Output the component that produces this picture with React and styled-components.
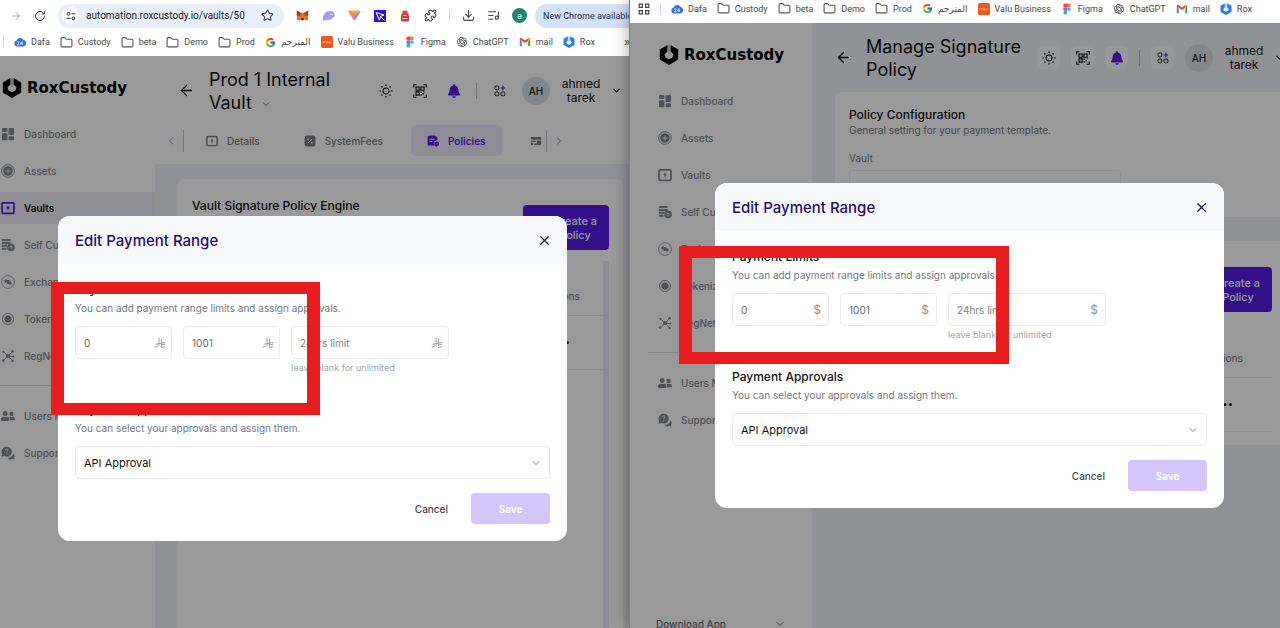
import React from "react";
import styled, { createGlobalStyle, css } from "styled-components";
import {
  ArrowLeft, ArrowRight, RotateCw, Star, Folder, Puzzle, Download, ListMusic,
  ChevronDown, ChevronLeft, ChevronRight, X, Plus,
} from "lucide-react";
import { FcGoogle } from "react-icons/fc";
import { RiOpenaiFill } from "react-icons/ri";
import { FaBell, FaUserFriends } from "react-icons/fa";

const GlobalStyle = createGlobalStyle`
  *, *::before, *::after { box-sizing: border-box; }
  html, body { margin: 0; height: 100%; overflow: hidden; }
  body { font-family: Inter, "Open Sans", sans-serif; font-size: 11px; color: #111; background: #fff; }
  button, input, select { font: inherit; color: inherit; margin: 0; }
  button { border: 0; padding: 0; background: none; cursor: pointer; }
  a { color: inherit; text-decoration: none; }
  h1, h2, h3, p { margin: 0; font-weight: 400; }
  svg { display: block; flex: none; }
`;

/* ---------- icons ---------- */

const Svg = ({ size = 14, box = 24, children, ...rest }) => (
  <svg width={size} height={size} viewBox={`0 0 ${box} ${box}`} fill="none" aria-hidden="true" {...rest}>
    {children}
  </svg>
);

const DashboardIcon = () => (
  <Svg box={14}>
    <g fill="currentColor">
      <rect x="1" y="1" width="5.4" height="4" rx=".8" />
      <rect x="1" y="6.2" width="5.4" height="7" rx=".8" />
      <rect x="7.6" y="1" width="5.4" height="7" rx=".8" />
      <rect x="7.6" y="9.2" width="5.4" height="4" rx=".8" />
    </g>
  </Svg>
);
const AssetsIcon = () => (
  <Svg box={14}>
    <circle cx="7" cy="7" r="6.3" stroke="currentColor" strokeWidth=".9" />
    <circle cx="7" cy="7" r="4.8" fill="currentColor" />
    <path d="M7 4.6v4.8M4.6 7h4.8" stroke="#fff" strokeWidth=".8" />
  </Svg>
);
const VaultIcon = ({ size = 14 }) => (
  <Svg box={14} size={size}>
    <rect x="1" y="1.8" width="12" height="10.6" rx="1.2" stroke="currentColor" strokeWidth="1.7" />
    <circle cx="7" cy="6.4" r="1.3" fill="currentColor" />
    <path d="M7 6.5v3" stroke="currentColor" strokeWidth="1" />
  </Svg>
);
const CustodyIcon = () => (
  <Svg box={14}>
    <path d="M.8 1h8.8v2H.8zM.8 3.9h8.8v2H.8zM.8 6.8h5.4v2H.8zM.8 9.7h4.8v2H.8z" fill="currentColor" />
    <circle cx="10" cy="9.4" r="3.8" fill="currentColor" />
    <path d="M8 9.6c1-1.6 3-1.6 4 0M10 8.6v2.4" stroke="#fff" strokeWidth=".8" />
  </Svg>
);
const ExchangeIcon = () => (
  <Svg box={14}>
    <circle cx="7" cy="7" r="6.4" stroke="currentColor" strokeWidth=".8" />
    <path d="M3 6 5.4 3.6V5h2.8v2.2H5.4v1.2z M11 8 8.6 10.4V9H5.8V6.8h2.8V5.6z" fill="currentColor" />
  </Svg>
);
const TokenIcon = () => (
  <Svg box={14}>
    <circle cx="7" cy="7" r="5.5" stroke="currentColor" strokeWidth=".9" />
    <circle cx="7" cy="7" r="3.6" fill="currentColor" />
  </Svg>
);
const NetworkIcon = () => (
  <Svg box={14}>
    <path d="M7 7 2.6 3M7 7l4.6-4.6M7 7l5 .6M7 7 2.4 11.4M7 7l4.4 4.8" stroke="currentColor" strokeWidth=".9" />
    <g fill="currentColor">
      <circle cx="7" cy="7" r="2" /><circle cx="2.4" cy="2.8" r="1.1" /><circle cx="11.6" cy="2.2" r="1.3" />
      <circle cx="12.4" cy="7.6" r="1" /><circle cx="2.2" cy="11.6" r="1.3" /><circle cx="11.6" cy="12" r="1.3" />
    </g>
  </Svg>
);
const SupportIcon = () => (
  <Svg box={14}>
    <path d="M12.4 7.2c1.6 1.6 1.4 3.6.6 4.6l.6 1.8-2-.5c-2 .8-4.2.2-5-1.4 3.2 0 5.6-1.8 5.8-4.5z" fill="currentColor" />
    <path d="M5.6.8a4.9 4.9 0 1 1-2 9.2L.4 10.8l.8-2.6A4.9 4.9 0 0 1 5.6.8z" fill="currentColor" />
    <path d="M4.3 4.3c.2-1.8 3-1.5 2.7.1-.2.9-1.3.9-1.3 2M5.7 7.4v.9" stroke="#fff" strokeWidth=".9" />
  </Svg>
);
const FeesIcon = () => (
  <Svg size={12} box={12}>
    <rect x=".6" y=".6" width="10.8" height="10.8" rx="2.4" fill="currentColor" />
    <path d="m4 8 4-4" stroke="#fff" strokeWidth=".9" />
    <circle cx="4.2" cy="4.3" r=".9" fill="#fff" /><circle cx="7.8" cy="7.7" r=".9" fill="#fff" />
  </Svg>
);
const PoliciesIcon = () => (
  <Svg size={12} box={12}>
    <path d="M3 .5h5l2.4 2.4v2.7C8 5 6.4 6.7 6.7 8.3c.1 1 .5 1.8 1 2.3H1.9C1 10.6.6 10 .6 9.2V2.6C.6 1.2 1.5.5 3 .5z" fill="currentColor" />
    <path d="M2.6 4.2h5M2.6 6.4h2.8" stroke="#fff" strokeWidth=".9" />
    <path d="M9.6 6.4 12 7.2v1.8c0 1.4-1.2 2.3-2.4 2.8-1.2-.5-2.2-1.4-2.2-2.8V7.2z" fill="currentColor" />
  </Svg>
);
const CardsIcon = () => (
  <Svg size={12} box={12}>
    <path d="M1.8 2h8.4c.6 0 1 .4 1 1v1.6H.8V3c0-.6.4-1 1-1zM.8 5.4h5.4v1.4H.8zM7 5.4h4.2V9c0 .6-.4 1-1 1H4V8.4h3zM.8 7.8h2.4V10H1.8c-.6 0-1-.4-1-1z" fill="currentColor" />
  </Svg>
);
const SunIcon = () => (
  <Svg size={14}>
    <circle cx="12" cy="12" r="5" stroke="currentColor" strokeWidth="1.8" />
    <g fill="currentColor">
      {[[12, 2], [12, 22], [2, 12], [22, 12], [5, 5], [19, 5], [5, 19], [19, 19]].map(([x, y]) => (
        <circle key={`${x}-${y}`} cx={x} cy={y} r="1.4" />
      ))}
    </g>
  </Svg>
);
const QrIcon = () => (
  <Svg size={14} box={14}>
    <path d="M.7 3.5V.7h2.8M10.5.7h2.8v2.8M.7 10.5v2.8h2.8M13.3 10.5v2.8h-2.8" stroke="currentColor" strokeWidth="1.1" />
    <path d="M3 3h3.2v3.2H3zM7.9 3h3.2v3.2H7.9zM3 7.9h3.2v3.2H3z" stroke="currentColor" strokeWidth="1.1" />
    <path d="M7.4 7.4H9V9H7.4zM9.4 9H11v1.4H9.4zM7.6 10.2H9v1.4H7.6zM10.4 7.4h1.2v1.2h-1.2z" fill="currentColor" />
  </Svg>
);
const AppsIcon = () => (
  <Svg size={12} box={12}>
    <g stroke="currentColor" strokeWidth="1">
      <rect x="1" y="1" width="3.8" height="3.8" rx="1.2" />
      <rect x="1" y="7" width="3.8" height="3.8" rx="1.2" />
      <rect x="7" y="7" width="3.8" height="3.8" rx="1.2" />
    </g>
    <path d="M8.9.8v4.4M6.7 3h4.4" stroke="#5519e6" strokeWidth="1.2" />
  </Svg>
);
const LogoMark = () => (
  <svg width="20" height="22" viewBox="0 0 20 22" aria-hidden="true">
    <path d="M8.4 1 .8 5.4v10.2L10 21l9.200-5.400V5.400L11.600 1v6.600l3 2.900-1.300 3.300L10 15.200l-3.300-1.400-1.300-3.300 3-2.900z" fill="#000" />
    <path d="M9.500 1h1v9h-1z" fill="#000" opacity=".35" />
  </svg>
);
const RiyalIcon = () => (
  <Svg size={12} box={12}>
    <path d="M5 .8v7c0 1-.8 1.5-4.4 2.3M7.4 1.4v8.2M1.6 7.3 11 5.4M7.4 7.9l4-.9M7 10.6l4-.9" stroke="currentColor" strokeWidth=".9" />
  </Svg>
);

const CloudIcon = () => (
  <Svg size={12} box={12}>
    <path d="M3 10.5a3 3 0 0 1-.4-5.9A3.7 3.7 0 0 1 9.5 4a3.3 3.3 0 0 1-.4 6.5z" fill="#2f6fed" />
    <path d="M3.3 6c1.4-1.2 2.4.3 0 2.8h2.2M8 9V5.6L6.4 7.8h2.5" stroke="#fff" strokeWidth=".8" />
  </Svg>
);
const ValuIcon = () => (
  <Svg size={12} box={12}>
    <rect width="12" height="12" rx="1.5" fill="#f4581c" />
    <path d="M1.8 5.5l1 1.5 1-1.5h1.5v1.3h1.5V5.5v1.3h2.5V5.4" stroke="#ffd9c8" strokeWidth=".7" />
  </Svg>
);
const FigmaIcon = () => (
  <Svg size={12} box={12}>
    <path d="M4 .5h2v3.7H4A1.850 1.850 0 0 1 4 .5z" fill="#f24e1e" />
    <path d="M6 .5h2a1.850 1.850 0 0 1 0 3.700H6z" fill="#ff7262" />
    <path d="M4 4.200h2v3.700H4a1.850 1.850 0 0 1 0-3.700z" fill="#a259ff" />
    <circle cx="7.9" cy="6" r="1.85" fill="#1abcfe" />
    <path d="M4 7.900h2v1.800A1.850 1.850 0 1 1 4 7.900z" fill="#0acf83" />
  </Svg>
);
const GmailIcon = () => (
  <Svg size={12} box={12}>
    <path d="M.8 2.500v7.800h2V5.500z" fill="#4285f4" />
    <path d="M11.200 2.500v7.800h-2V5.500z" fill="#34a853" />
    <path d="M.8 3.200 6 7l5.200-3.800V2.400c-.6-.8-1.500-.6-2-.2L6 4.600 2.800 2.200c-.5-.4-1.400-.6-2 .2z" fill="#ea4335" />
    <path d="M9.200 4.700V2.200c.8-.6 2-.2 2 1z" fill="#fbbc04" />
  </Svg>
);
const RoxIcon = () => (
  <Svg size={12} box={12}>
    <path d="M4.800.3.500 2.800v6.300L6 11.900l5.500-2.800V2.800L7.200.3v4.300l1.600 1.600L8 7.800l-2 .9-2-.9-.8-1.600 1.600-1.600z" fill="#2b7cf0" />
    <path d="M5.500.6h1v5h-1z" fill="#7db0f8" />
  </Svg>
);
const GridIcon = () => (
  <Svg size={12} box={12}>
    <path d="M1.200 1.200h3.200v3.200H1.200zM7.600 1.200h3.200v3.200H7.600zM1.200 7.600h3.200v3.200H1.200zM7.600 7.600h3.200v3.200H7.600z" stroke="#444" strokeWidth="1.2" />
  </Svg>
);
const SiteIcon = () => (
  <Svg size={10} box={10}>
    <path d="M5.400 2.800H9.500M.5 7.300h4" stroke="#333" strokeWidth="1.1" />
    <circle cx="2.5" cy="2.8" r="1.4" stroke="#333" strokeWidth="1" />
    <circle cx="7.4" cy="7.3" r="1.4" stroke="#333" strokeWidth="1" />
  </Svg>
);
const FoxIcon = () => (
  <Svg size={13} box={13}>
    <path d="M.8 1.500 5 4h3l4.200-2.500.3 4-.7 2.500.6 2.500-2.400 1-1.700-1H4.700l-1.700 1-2.400-1L1.200 8 .5 5.500z" fill="#e8702a" />
    <path d="M.8 1.500 5 4 4 7 1.200 6.500zM12.200 1.500 8 4l1 3 2.800-.5z" fill="#a5401b" />
    <path d="M5 9.200h3l-.5 2h-2z" fill="#2c2c2c" />
  </Svg>
);
const GhostIcon = () => (
  <Svg size={13} box={13}>
    <path d="M.6 10.500C1 5 4 2 8 2c3 0 4.700 1.600 4.700 4 0 2-1.200 3.200-2.600 3-1 2-2.400 2.200-3.100 1.200-1 1.300-2 1.600-2.600.6-1.200 1-3 1.400-3.800-.3z" fill="#a99bea" />
    <path d="M8.400 4.600v1.400M10.300 4.600v1.400" stroke="#fff" strokeWidth=".8" />
  </Svg>
);
const GemIcon = () => (
  <Svg size={13} box={13}>
    <path d="M1.500 1.500h10c.8 0 1 .8.8 1.500l-5 7.800c-.4.6-1.200.6-1.600 0L.7 3c-.3-.7 0-1.500.8-1.500z" fill="#f7a544" />
    <path d="M.7 3c-.3-.7 0-1.500.8-1.500L6.500 5v6.200c-.3 0-.6-.1-.8-.4z" fill="#f5806e" />
    <path d="M12.300 3 6.500 5.200v6c.3 0 .6-.1.800-.4z" fill="#8a8ff0" />
  </Svg>
);
const CursorIcon = () => (
  <Svg size={12} box={12}>
    <rect width="12" height="12" fill="#2a16d8" />
    <path d="M2 2.500 10 5 6.600 6.300 5.400 10zM6.500 6.500l4 4" stroke="#fff" strokeWidth="1" />
  </Svg>
);
const RobotIcon = () => (
  <Svg size={12} box={12}>
    <path d="M4 3V1.200h4V3M2.500 11V5.500C2.500 4 3.500 3 6 3s3.500 1 3.500 2.500V11z" stroke="#e0393c" fill="#e0393c" />
    <path d="M4.500 5.500h3M3.500 8.500h5" stroke="#fff" strokeWidth="1.2" />
  </Svg>
);

/* ---------- windows and browser chrome ---------- */

const Desktop = styled.div`
  display: flex;
  height: 100vh;
  overflow: hidden;
`;
const BrowserWindow = styled.section`
  position: relative;
  display: flex;
  flex-direction: column;
  flex: ${(p) => p.$share} 1 0;
  min-width: 0;
  background: #fff;
  ${(p) => p.$front && css`
    z-index: 1;
    box-shadow: -1px 0 0 #7d7e82, 0 0 16px rgba(0, 0, 0, 0.4);
  `}
`;
const Toolbar = styled.div`
  display: flex;
  align-items: center;
  gap: 12px;
  flex: none;
  height: 31px;
  padding-left: 10px;
  overflow: hidden;
  font-family: Roboto, sans-serif;
  color: #444;
`;
const AddressBar = styled.label`
  display: flex;
  align-items: center;
  gap: 7px;
  flex: none;
  width: 226px;
  height: 24px;
  padding: 0 10px 0 4px;
  border-radius: 12px;
  background: #e9effa;
`;
const SiteBadge = styled.span`
  display: grid;
  place-items: center;
  flex: none;
  width: 17px;
  height: 17px;
  border-radius: 50%;
  background: #fff;
`;
const Address = styled.input`
  flex: 1;
  min-width: 0;
  padding: 0;
  border: 0;
  outline: 0;
  background: none;
  font-size: 10px;
  color: #222;
`;
const Extensions = styled.div`
  display: flex;
  align-items: center;
  gap: 13px;
  flex: none;
`;
const ToolSeparator = styled.span`
  width: 1px;
  height: 11px;
  flex: none;
  background: #c3d8f5;
`;
const ProfileDot = styled.button`
  flex: none;
  width: 15px;
  height: 15px;
  border-radius: 50%;
  background: #1f8570;
  color: #fff;
  font-size: 9px;
  line-height: 14px;
`;
const UpdateButton = styled.button`
  flex: none;
  height: 24px;
  margin-left: -4px;
  padding: 0 16px 0 8px;
  border-radius: 12px 0 0 12px;
  background: #d5e2fb;
  font-size: 9px;
  color: #1d2b50;
  white-space: nowrap;
`;
const Bookmarks = styled.nav`
  display: flex;
  align-items: center;
  gap: 10px;
  flex: none;
  height: ${(p) => p.$height}px;
  padding: 0 0 ${(p) => p.$bottom}px ${(p) => p.$start}px;
  overflow: hidden;
  font-family: Roboto, "DejaVu Sans", sans-serif;
  font-size: 9px;
  color: #474747;
`;
const Bookmark = styled.a`
  display: flex;
  align-items: center;
  gap: 5px;
  flex: none;
  white-space: nowrap;
`;
const MoreBookmarks = styled.button`
  margin-left: auto;
  font-size: 13px;
  line-height: 12px;
`;
const folder = <Folder size={13} strokeWidth={2} color="#555" />;
const BOOKMARKS = [
  ["Dafa", <CloudIcon />],
  ["Custody", folder],
  ["beta", folder],
  ["Demo", folder],
  ["Prod", folder],
  ["المترجم", <FcGoogle size={11} />],
  ["Valu Business", <ValuIcon />],
  ["Figma", <FigmaIcon />],
  ["ChatGPT", <RiOpenaiFill size={12} color="#333" />],
  ["mail", <GmailIcon />],
  ["Rox", <RoxIcon />],
];
const BookmarkItems = () =>
  BOOKMARKS.map(([name, icon]) => (
    <Bookmark href="#" key={name}>{icon}{name}</Bookmark>
  ));

/* ---------- application shell ---------- */

const Viewport = styled.div`
  position: relative;
  flex: 1;
  min-height: 0;
  overflow: hidden;
`;
const Shell = styled.div`
  display: flex;
  min-height: calc(100% + 12px);
  margin: 0 -${(p) => p.$clipRight}px 0 -${(p) => p.$clipLeft}px;
`;
const Sidebar = styled.nav`
  display: flex;
  flex-direction: column;
  gap: 5px;
  flex: none;
  width: 182px;
  background: #fff;
`;
const Brand = styled.a`
  display: flex;
  align-items: center;
  gap: 5px;
  height: 57px;
  padding: 6px 0 0 29px;
  font-family: "DejaVu Sans", sans-serif;
  font-weight: 700;
  font-size: 15px;
  color: #000;
`;
const NavItem = styled.a`
  display: flex;
  align-items: center;
  gap: 9px;
  height: 32px;
  padding-left: 28px;
  font-size: 10px;
  white-space: nowrap;
  color: ${(p) => (p.$active ? "#111" : "#83878f")};
  font-weight: ${(p) => (p.$active ? 600 : 500)};
  background: ${(p) => (p.$active ? "#eeecfa" : "none")};
  svg { color: ${(p) => (p.$active ? "#5519e6" : "inherit")}; }
`;
const NavDivider = styled.hr`
  width: 164px;
  height: 1px;
  margin: 8px 0 9px 18px;
  border: 0;
  background: #dcdde3;
`;
const DownloadRow = styled.button`
  display: flex;
  align-items: center;
  justify-content: space-between;
  height: 32px;
  margin-top: auto;
  padding: 0 26px;
  font-size: 10px;
  font-weight: 500;
  color: #6b6f77;
`;
const NAV = [
  ["Dashboard", <DashboardIcon />],
  ["Assets", <AssetsIcon />],
  ["Vaults", <VaultIcon />],
  ["Self Custody", <CustodyIcon />],
  ["Exchange", <ExchangeIcon />],
  ["Tokenization", <TokenIcon />],
  ["RegNetwork", <NetworkIcon />],
];
const NAV_FOOT = [
  ["Users Management", <FaUserFriends size={14} />],
  ["Support", <SupportIcon />],
];
function SideNav({ active, download }) {
  return (
    <Sidebar>
      <Brand href="#"><LogoMark />RoxCustody</Brand>
      {NAV.map(([name, icon]) => (
        <NavItem href="#" key={name} $active={name === active}>{icon}{name}</NavItem>
      ))}
      <NavDivider />
      {NAV_FOOT.map(([name, icon]) => (
        <NavItem href="#" key={name}>{icon}{name}</NavItem>
      ))}
      {download && <DownloadRow>Download App<ChevronDown size={12} /></DownloadRow>}
    </Sidebar>
  );
}

const Main = styled.main`
  display: flex;
  flex-direction: column;
  flex: 1;
  min-width: 0;
  background: #f1f3fa;
`;
const Header = styled.header`
  display: flex;
  align-items: center;
  gap: 11px;
  flex: none;
  height: 69px;
  padding: 0 8px 0 23px;
  background: ${(p) => (p.$plain ? "#fff" : "none")};
`;
const PageTitle = styled.h1`
  flex: 1;
  min-width: 0;
  padding-left: 3px;
  font-size: 18px;
  line-height: 23px;
  color: #0d0d12;
  svg { display: inline-block; margin-left: 8px; vertical-align: middle; color: #777; }
`;
const IconButton = styled.button`
  display: grid;
  place-items: center;
  flex: none;
  width: 23px;
  height: 23px;
  border-radius: 5px;
  background: ${(p) => (p.$plain ? "none" : "#fbfcfe")};
  color: ${(p) => (p.$accent ? "#5519e6" : "#111")};
`;
const HeaderSeparator = styled.span`
  width: 1px;
  height: 16px;
  flex: none;
  background: #bdbfc6;
`;
const Avatar = styled.span`
  display: grid;
  place-items: center;
  flex: none;
  width: 28px;
  height: 28px;
  border-radius: 50%;
  background: #dde2e8;
  font-size: 10px;
  font-weight: 500;
  color: #222;
`;
const UserName = styled.button`
  display: flex;
  align-items: center;
  gap: 10px;
  flex: none;
  font-size: 12px;
  line-height: 14px;
  color: #111;
  span { width: 40px; text-align: center; }
`;
function TopBar({ plain, title, menu }) {
  return (
    <Header $plain={plain}>
      <button aria-label="Back"><ArrowLeft size={17} strokeWidth={1.8} /></button>
      <PageTitle>{title}{menu && <ChevronDown size={12} />}</PageTitle>
      <IconButton aria-label="Theme" $plain={plain}><SunIcon /></IconButton>
      <IconButton aria-label="Scan code" $plain={plain}><QrIcon /></IconButton>
      <IconButton aria-label="Notifications" $plain={plain} $accent><FaBell size={14} /></IconButton>
      <HeaderSeparator />
      <IconButton aria-label="Apps" $plain={plain}><AppsIcon /></IconButton>
      <Avatar>AH</Avatar>
      <UserName><span>ahmed tarek</span><ChevronDown size={11} strokeWidth={2.5} /></UserName>
    </Header>
  );
}

const TabBar = styled.div`
  display: flex;
  align-items: center;
  gap: 6px;
  flex: none;
  height: 39px;
  padding: 0 65px 8px 10px;
  background: #fff;
  color: #8f80c8;
`;
const TabSeparator = styled.span`
  width: 1px;
  height: 22px;
  flex: none;
  background: #c5c8d3;
`;
const TabList = styled.div`
  display: flex;
  gap: 12px;
  flex: 1;
  min-width: 0;
  margin-right: -6px;
  overflow: hidden;
`;
const Tab = styled.button`
  display: flex;
  align-items: center;
  gap: 9px;
  flex: none;
  height: 31px;
  padding: 0 16px;
  border-radius: 5px;
  font-size: 10px;
  font-weight: ${(p) => (p.$active ? 600 : 500)};
  color: ${(p) => (p.$active ? "#5519e6" : "#777a82")};
  background: ${(p) => (p.$active ? "#efedfb" : "none")};
`;

const Content = styled.div`
  display: flex;
  flex-direction: column;
  gap: 24px;
  flex: 1;
  padding: ${(p) => p.$top}px 7px 0 23px;
`;
const Card = styled.section`
  flex: ${(p) => (p.$fill ? "1 0 auto" : "none")};
  min-height: ${(p) => p.$min || 0}px;
  padding: ${(p) => p.$top}px 14px 13px;
  border-radius: 6px;
  background: #fff;
`;
const CardTitle = styled.h2`
  font-size: 12px;
  line-height: 16px;
  font-weight: 500;
  color: #111;
`;
const Muted = styled.p`
  font-size: 10px;
  line-height: 14px;
  color: #74787f;
`;
const VaultField = styled.label`
  display: block;
  margin-top: 14px;
  font-size: 10px;
  line-height: 14px;
  color: #7a7e87;
  input {
    display: block;
    width: 272px;
    height: 33px;
    margin-top: 5px;
    border: 1px solid #f0f0f4;
    border-radius: 3px;
    background: none;
  }
`;
const PolicyHead = styled.div`
  display: flex;
  align-items: flex-start;
  justify-content: space-between;
  padding-top: 2px;
`;
const CreateButton = styled.button`
  display: flex;
  align-items: center;
  justify-content: center;
  gap: 6px;
  width: 86px;
  height: 45px;
  margin-top: 7px;
  border-radius: 4px;
  background: #5519e6;
  color: #fff;
  font-size: 11px;
  line-height: 14px;
  font-weight: 500;
  span { width: 48px; }
`;
const TableArea = styled.div`
  display: flex;
  margin-top: 11px;
`;
const PolicyTable = styled.table`
  flex: 1;
  align-self: flex-start;
  border-collapse: collapse;
  font-size: 10px;
  text-align: right;
  th { height: 54px; padding: 17px ${(p) => p.$inset}px 0 0; font-weight: 500; color: #83878f; }
  td { height: 54px; padding: 0 ${(p) => p.$inset + 10}px 8px 0; font-weight: 700; font-size: 16px; }
  tr { border-bottom: 1px solid #ebecf0; }
`;
const ScrollTrack = styled.div`
  flex: none;
  width: 6px;
  height: 400px;
  background: #e9ebf3;
`;
function PolicyCard({ fill }) {
  return (
    <Card $top={17} $fill={fill}>
      <PolicyHead>
        <CardTitle>Vault Signature Policy Engine</CardTitle>
        <CreateButton><Plus size={12} /><span>Create a Policy</span></CreateButton>
      </PolicyHead>
      <TableArea>
        <PolicyTable $inset={fill ? 23 : 29}>
          <thead><tr><th scope="col">Actions</th></tr></thead>
          <tbody><tr><td>...</td></tr></tbody>
        </PolicyTable>
        {fill && <ScrollTrack />}
      </TableArea>
    </Card>
  );
}

/* ---------- modal ---------- */

const Backdrop = styled.div`
  position: absolute;
  inset: 0;
  display: flex;
  justify-content: center;
  align-items: flex-start;
  padding: 160px ${(p) => p.$right}px 0 ${(p) => p.$left}px;
  background: rgba(0, 0, 0, 0.4);
`;
const Dialog = styled.form`
  flex: 0 1 509px;
  border-radius: 12px;
  background: #fff;
  overflow: hidden;
`;
const DialogHead = styled.div`
  display: flex;
  align-items: center;
  justify-content: space-between;
  height: 48px;
  padding: 0 15px 0 17px;
  background: #f8f9fd;
  color: #250c6b;
`;
const DialogTitle = styled.h2`
  font-size: 15px;
  font-weight: 500;
`;
const DialogBody = styled.div`
  padding: 18px 17px 17px;
`;
const Description = styled(Muted)`
  line-height: 16px;
  margin: 2px 0 10px;
`;
const LimitRow = styled.div`
  display: flex;
  align-items: flex-start;
  gap: 11px;
  height: 76px;
`;
const LimitField = styled.div`
  width: ${(p) => (p.$wide ? 158 : 97)}px;
  flex: none;
`;
const InputBox = styled.label`
  display: flex;
  align-items: center;
  height: 33px;
  padding: 0 5px 0 8px;
  border: 1px solid #ebebef;
  border-radius: 4px;
  color: #8f929a;
  input {
    flex: 1;
    min-width: 0;
    padding: 0;
    border: 0;
    outline: 0;
    background: none;
    font-size: 10px;
    color: #63666e;
  }
  input::placeholder { color: #7d8087; opacity: 1; }
`;
const Dollar = styled.span`
  width: 12px;
  text-align: center;
  font-size: 12px;
`;
const Hint = styled.p`
  padding-top: 2px;
  font-size: 9px;
  line-height: 13px;
  color: #a3a5ab;
  white-space: nowrap;
`;
const SelectBox = styled.label`
  position: relative;
  display: block;
  select {
    display: block;
    width: 100%;
    height: 33px;
    padding: 0 30px 0 8px;
    border: 1px solid #ebebef;
    border-radius: 4px;
    appearance: none;
    background: #fff;
    font-size: 11px;
    color: #111;
  }
  svg { position: absolute; right: 8px; top: 11px; color: #888; pointer-events: none; }
`;
const DialogActions = styled.div`
  display: flex;
  justify-content: flex-end;
  gap: 23px;
  margin-top: 14px;
`;
const CancelButton = styled.button`
  font-size: 10px;
  font-weight: 500;
  color: #45484e;
`;
const SaveButton = styled.button`
  width: 79px;
  height: 31px;
  border-radius: 4px;
  background: #d4c5fb;
  color: #fff;
  font-size: 10px;
  font-weight: 600;
`;
function PaymentRangeDialog({ unit }) {
  return (
    <Dialog role="dialog" aria-label="Edit Payment Range" onSubmit={(e) => e.preventDefault()}>
      <DialogHead>
        <DialogTitle>Edit Payment Range</DialogTitle>
        <button type="button" aria-label="Close"><X size={15} /></button>
      </DialogHead>
      <DialogBody>
        <CardTitle as="h3">Payment Limits</CardTitle>
        <Description>You can add payment range limits and assign approvals.</Description>
        <LimitRow>
          <LimitField>
            <InputBox><input aria-label="From" defaultValue="0" />{unit}</InputBox>
          </LimitField>
          <LimitField>
            <InputBox><input aria-label="To" defaultValue="1001" />{unit}</InputBox>
          </LimitField>
          <LimitField $wide>
            <InputBox><input aria-label="24hrs limit" placeholder="24hrs limit" />{unit}</InputBox>
            <Hint>leave blank for unlimited</Hint>
          </LimitField>
        </LimitRow>
        <CardTitle as="h3">Payment Approvals</CardTitle>
        <Description>You can select your approvals and assign them.</Description>
        <SelectBox>
          <select aria-label="Payment Approvals" defaultValue="api">
            <option value="api">API Approval</option>
          </select>
          <ChevronDown size={12} />
        </SelectBox>
        <DialogActions>
          <CancelButton type="button">Cancel</CancelButton>
          <SaveButton type="submit">Save</SaveButton>
        </DialogActions>
      </DialogBody>
    </Dialog>
  );
}

/* red frame laid over a window to point at the limit fields */
const Highlight = styled.div`
  position: absolute;
  left: ${(p) => p.$x}px;
  top: ${(p) => p.$y}px;
  width: ${(p) => p.$w}px;
  height: ${(p) => p.$h}px;
  border: 12px solid #e71c1c;
  border-width: 12px 13px;
  pointer-events: none;
`;

export default function App() {
  return (
    <>
      <GlobalStyle />
      <Desktop>
        <BrowserWindow $share={63}>
          <Toolbar>
            <ArrowRight size={12} color="#aaa" />
            <RotateCw size={12} />
            <AddressBar>
              <SiteBadge><SiteIcon /></SiteBadge>
              <Address aria-label="Address" defaultValue="automation.roxcustody.io/vaults/50" />
              <Star size={13} />
            </AddressBar>
            <Extensions>
              <FoxIcon />
              <GhostIcon />
              <GemIcon />
              <CursorIcon />
              <RobotIcon />
              <Puzzle size={13} />
            </Extensions>
            <ToolSeparator />
            <Download size={13} />
            <ListMusic size={13} />
            <ProfileDot>a</ProfileDot>
            <UpdateButton>New Chrome available</UpdateButton>
          </Toolbar>
          <Bookmarks $height={25} $bottom={3} $start={3}>
            <ToolSeparator />
            <BookmarkItems />
            <MoreBookmarks aria-label="More bookmarks">»</MoreBookmarks>
          </Bookmarks>
          <Viewport>
            <Shell $clipLeft={27} $clipRight={0}>
              <SideNav active="Vaults" />
              <Main>
                <TopBar plain menu title="Prod 1 Internal Vault" />
                <TabBar>
                  <ChevronLeft size={12} />
                  <TabSeparator />
                  <TabList>
                    <Tab><VaultIcon size={12} />Details</Tab>
                    <Tab><FeesIcon />SystemFees</Tab>
                    <Tab $active><PoliciesIcon />Policies</Tab>
                    <Tab aria-label="Cards"><CardsIcon /></Tab>
                  </TabList>
                  <TabSeparator />
                  <ChevronRight size={12} />
                </TabBar>
                <Content $top={15}>
                  <PolicyCard fill />
                </Content>
              </Main>
            </Shell>
            <Backdrop $left={0} $right={5}>
              <PaymentRangeDialog unit={<RiyalIcon />} />
            </Backdrop>
          </Viewport>
          <Highlight $x={51} $y={282} $w={269} $h={133} />
        </BrowserWindow>

        <BrowserWindow $share={65} $front>
          <Bookmarks $height={23} $bottom={6} $start={8}>
            <GridIcon />
            <ToolSeparator />
            <BookmarkItems />
          </Bookmarks>
          <Viewport>
            <Shell $clipLeft={0} $clipRight={13}>
              <SideNav download />
              <Main>
                <TopBar title="Manage Signature Policy" />
                <Content $top={0}>
                  <Card $top={15} $min={125}>
                    <CardTitle>Policy Configuration</CardTitle>
                    <Muted>General setting for your payment template.</Muted>
                    <VaultField>Vault<input /></VaultField>
                  </Card>
                  <PolicyCard />
                </Content>
              </Main>
            </Shell>
            <Backdrop $left={29} $right={0}>
              <PaymentRangeDialog unit={<Dollar>$</Dollar>} />
            </Backdrop>
          </Viewport>
          <Highlight $x={49} $y={246} $w={330} $h={118} />
        </BrowserWindow>
      </Desktop>
    </>
  );
}
